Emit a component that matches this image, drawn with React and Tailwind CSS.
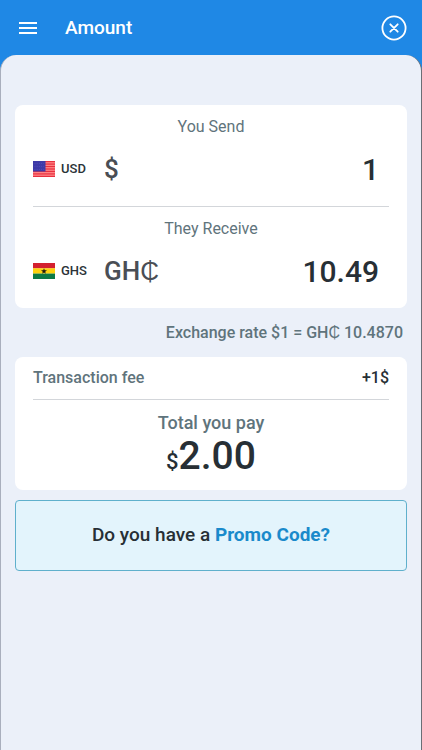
import React, { useState } from 'react';

const RATE = 10.487;
const FEE = 1;

const UsFlag = () => (
    <svg viewBox="0 0 22 16" className="w-[22px] h-4 shrink-0" aria-hidden="true">
        <rect width="22" height="16" fill="#ff8a8a" />
        {[0, 1, 2, 3, 4, 5, 6].map((i) => (
            <rect key={i} y={i * 2.46} width="22" height="1.23" fill="#e8303f" />
        ))}
        <rect width="12.5" height="10.5" fill="#3e3aa8" />
        {[2, 5, 8].map((y) => (
            <path key={y} d={`M1.5 ${y + 0.4}h10`} stroke="#5552bd" strokeWidth="0.8" strokeDasharray="0.9 1.3" />
        ))}
    </svg>
);

const GhanaFlag = () => (
    <svg viewBox="0 0 22 16" className="w-[22px] h-4 shrink-0" aria-hidden="true">
        <rect width="22" height="5.4" fill="#d3202f" />
        <rect y="5.3" width="22" height="5.4" fill="#fcd20f" />
        <rect y="10.6" width="22" height="5.4" fill="#0c7a45" />
        <path d="M11 5.2l.75 2.1h2.2l-1.75 1.35.65 2.15L11 9.5l-1.85 1.3.65-2.15-1.75-1.35h2.2z" fill="#1a1a10" />
    </svg>
);

const AmountRow = ({ id, title, flag, code, symbol, ...inputProps }) => (
    <div>
        <label htmlFor={id} className="block text-center text-[16px] leading-5 text-[#5f747c]">{title}</label>
        <div className="flex items-center h-16">
            {flag}
            <span className="w-[43px] ml-1.5 text-[13px] font-medium text-[#2b3338]">{code}</span>
            <span className="shrink-0 text-[26px] font-medium text-[#4a4e55]">{symbol}</span>
            <input
                id={id}
                inputMode="decimal"
                className="flex-1 min-w-0 pr-2.5 bg-transparent text-right text-[30px] font-medium text-[#272f35] outline-none"
                {...inputProps}
            />
        </div>
    </div>
);

export default function App() {
    const [amount, setAmount] = useState('1');

    const value = parseFloat(amount) || 0;

    return (
        <div className="min-h-screen flex flex-col bg-[#1f88e5] font-['Roboto',sans-serif]">
            <header className="flex items-center h-[55px] pl-[19px] pr-[15px] text-white">
                <button type="button" aria-label="Menu">
                    <svg viewBox="0 0 18 12" className="w-[18px] h-3" fill="currentColor">
                        <path d="M0 0h18v2H0zM0 5h18v2H0zM0 10h18v2H0z" />
                    </svg>
                </button>
                <h1 className="ml-7 flex-1 text-[19px] leading-7 pt-px font-medium">Amount</h1>
                <button type="button" aria-label="Close">
                    <svg viewBox="0 0 26 26" className="w-[26px] h-[26px]" fill="none" stroke="currentColor" strokeWidth="1.8" strokeLinecap="round">
                        <circle cx="13" cy="13" r="11.6" />
                        <path d="M9.3 9.3l7.4 7.4M16.7 9.3l-7.4 7.4" />
                    </svg>
                </button>
            </header>

            <main className="flex-1 rounded-t-2xl border-l border-r border-l-[#a9afbd] border-r-[#6b6e75] bg-[#ebf0f9] px-3.5 pt-[50px] pb-6">
                {/* Amounts */}
                <section className="rounded-lg bg-white px-[18px] pt-3 pb-[5px]">
                    <AmountRow
                        id="send"
                        title="You Send"
                        flag={<UsFlag />}
                        code="USD"
                        symbol="$"
                        value={amount}
                        onChange={(e) => setAmount(e.target.value)}
                    />
                    <div className="h-px mt-[5px] mb-3 bg-[#d3d6da]" />
                    <AmountRow
                        id="receive"
                        title="They Receive"
                        flag={<GhanaFlag />}
                        code="GHS"
                        symbol="GH₵"
                        value={(value * RATE).toFixed(2)}
                        readOnly
                    />
                </section>

                <p className="pt-[15px] pb-3.5 pr-1 text-right text-[16px] leading-5 font-medium text-[#5f747c]">
                    Exchange rate $1 = GH₵ {RATE.toFixed(4)}
                </p>

                {/* Fee and total */}
                <section className="rounded-lg bg-white px-[18px] pt-[11px] pb-[5px]">
                    <div className="flex justify-between pb-[11px] border-b border-[#d3d6da] text-[16px] leading-5 font-medium">
                        <span className="text-[#5f747c]">Transaction fee</span>
                        <span className="text-[#272f35]">+{FEE}$</span>
                    </div>
                    <div className="pt-[13px] text-center font-medium">
                        <p className="text-[18px] leading-5 text-[#5f747c]">Total you pay</p>
                        <p className="text-[39px] leading-[46px] text-[#272f35]">
                            <span className="text-[22px]">$</span>{(value + FEE).toFixed(2)}
                        </p>
                    </div>
                </section>

                <div className="flex items-center justify-center h-[71px] mt-2.5 rounded-[4px] border border-[#5fb0cc] bg-[#e3f4fc] text-[19px] font-medium text-[#272f35]">
                    <p>
                        Do you have a <a href="#promo" className="font-bold text-[#1a8acb]">Promo Code?</a>
                    </p>
                </div>
            </main>
        </div>
    );
}
